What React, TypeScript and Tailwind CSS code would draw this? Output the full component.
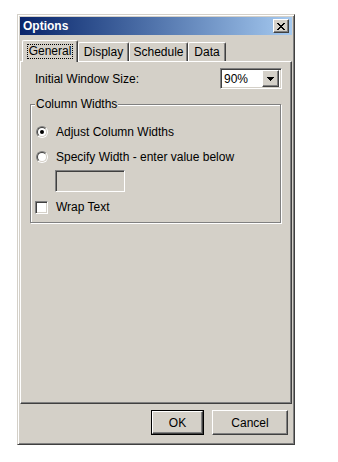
import React from 'react';

const raised =
  'border border-t-white border-l-white border-r-[#404040] border-b-[#404040] bg-[#D4D0C8] shadow-[inset_-1px_-1px_0_#808080]';
const sunken =
  'border border-t-[#808080] border-l-[#808080] border-r-white border-b-white shadow-[inset_1px_1px_0_#404040,inset_-1px_-1px_0_#D4D0C8]';

function CloseGlyph() {
  // classic 8x7 pixel cross
  const rows = ['XX....XX', '.XX..XX.', '..XXXX..', '...XX...', '..XXXX..', '.XX..XX.', 'XX....XX'];
  return (
    <svg width="8" height="7" viewBox="0 0 8 7" shapeRendering="crispEdges">
      {rows.flatMap((r, y) =>
        r.split('').map((c, x) => (c === 'X' ? <rect key={`${x}-${y}`} x={x} y={y} width="1" height="1" fill="#000" /> : null))
      )}
    </svg>
  );
}

function Radio({ checked }: { checked?: boolean }) {
  return (
    <span className="flex h-[12px] w-[12px] rounded-full border border-t-[#808080] border-l-[#808080] border-r-white border-b-white">
      <span className="flex flex-1 items-center justify-center rounded-full border border-t-[#404040] border-l-[#404040] border-r-[#D4D0C8] border-b-[#D4D0C8] bg-white">
        {checked && <span className="h-[4px] w-[4px] rounded-full bg-black" />}
      </span>
    </span>
  );
}

function Tab({ label, width, active }: { label: string; width: string; active?: boolean }) {
  if (active) {
    return (
      <div
        className={`relative z-10 -mb-px flex h-[22px] items-center justify-center rounded-t-[2px] border-l border-t border-r border-l-white border-t-white border-r-[#404040] bg-[#D4D0C8] shadow-[inset_-1px_0_0_#808080] ${width}`}
      >
        <span className="border border-dotted border-black px-[1px] leading-[13px]">{label}</span>
      </div>
    );
  }
  return (
    <div
      className={`flex h-[19px] items-center justify-center rounded-t-[2px] border-l border-t border-r border-l-white border-t-white border-r-[#404040] shadow-[inset_-1px_0_0_#808080] ${width}`}
    >
      {label}
    </div>
  );
}

export default function App() {
  return (
    <div className="min-h-screen bg-white pl-[17px] pt-[14px] font-['Liberation_Sans',Arial,sans-serif] text-[12px] leading-[14px] text-black">
      {/* Window */}
      <div className="flex h-[431px] w-[278px] flex-col border border-[#D4D0C8] border-r-[#404040] border-b-[#404040] bg-[#D4D0C8] p-[2px] shadow-[inset_1px_1px_0_#fff,inset_-1px_-1px_0_#808080]">
        {/* Title bar */}
        <div className="flex h-[18px] items-center justify-between bg-linear-to-r from-[#0A246A] to-[#A6CAF0] pl-[3px] pr-[3px]">
          <span className="font-bold text-white">Options</span>
          <div className={`flex h-[14px] w-[16px] items-center justify-center ${raised}`}>
            <CloseGlyph />
          </div>
        </div>

        {/* Tabs */}
        <div className="mt-[5px] flex h-[21px] items-end pl-[2px]">
          <Tab label="General" width="w-[56px]" active />
          <Tab label="Display" width="w-[51px]" />
          <Tab label="Schedule" width="w-[59px]" />
          <Tab label="Data" width="w-[38px]" />
        </div>

        {/* Tab panel */}
        <div className="flex h-[343px] flex-col border border-t-white border-l-white border-r-[#404040] border-b-[#404040] shadow-[inset_-1px_-1px_0_#808080]">
          <div className="ml-[14px] mr-[9px] mt-[6px] flex items-center justify-between">
            <span>Initial Window Size:</span>
            <div className={`flex h-[21px] w-[62px] items-center bg-white p-[2px] ${sunken}`}>
              <span className="flex-1 pl-[1px]">90%</span>
              <div className={`flex h-[17px] w-[17px] items-center justify-center ${raised}`}>
                <svg width="7" height="4" viewBox="0 0 7 4" shapeRendering="crispEdges">
                  <path d="M0 0h7v1h-1v1h-1v1h-1v1h-1v-1h-1v-1h-1v-1h-1z" fill="#000" />
                </svg>
              </div>
            </div>
          </div>

          <fieldset className="ml-[9px] mr-[10px] mt-[8px] flex flex-col border border-[#808080] pb-[7px] pt-[13px] shadow-[inset_1px_1px_0_#fff,1px_1px_0_#fff]">
            <legend className="ml-[4px] bg-[#D4D0C8] px-[1px]">Column Widths</legend>
            <label className="ml-[5px] flex h-[16px] items-center gap-[8px]">
              <Radio checked />
              <span>Adjust Column Widths</span>
            </label>
            <label className="ml-[5px] mt-[9px] flex h-[16px] items-center gap-[8px]">
              <Radio />
              <span>Specify Width - enter value below</span>
            </label>
            <div className={`ml-[24px] mt-[5px] h-[22px] w-[70px] bg-[#D4D0C8] ${sunken}`} />
            <label className="ml-[4px] mt-[7px] flex h-[16px] items-center gap-[8px]">
              <span className={`h-[13px] w-[13px] bg-white ${sunken}`} />
              <span>Wrap Text</span>
            </label>
          </fieldset>
        </div>

        {/* Buttons */}
        <div className="mt-[6px] flex justify-end gap-[8px] pr-[4px]">
          <div className="h-[25px] w-[53px] border border-black">
            <div className={`flex h-full items-center justify-center ${raised}`}>OK</div>
          </div>
          <div className={`flex h-[25px] w-[76px] items-center justify-center ${raised}`}>Cancel</div>
        </div>
      </div>
    </div>
  );
}
